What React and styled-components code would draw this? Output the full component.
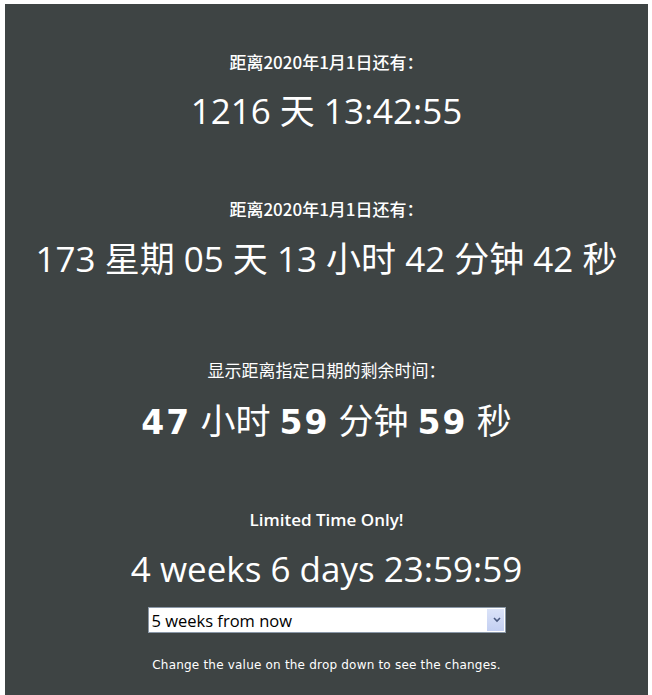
import React from "react";
import styled, { createGlobalStyle } from "styled-components";

const Global = createGlobalStyle`
  html, body { margin: 0; padding: 0; background: #ffffff; }
  body { font-family: "Noto Sans", "Noto Sans CJK SC", sans-serif; }
`;

const Panel = styled.div`
  margin: 4px 4px 0 5px;
  background: #3e4444;
  min-height: 691px;
  color: #ffffff;
  display: flex;
  flex-direction: column;
  align-items: center;
  padding-top: 47px;
  box-sizing: border-box;
`;

const Block = styled.section`
  display: flex;
  flex-direction: column;
  align-items: center;
  margin-bottom: ${(p) => p.$gap}px;
`;

const Label = styled.div`
  font-family: "Noto Sans CJK SC", "Noto Sans", sans-serif;
  font-size: 17px;
  line-height: 22px;
  font-weight: ${(p) => (p.$bold ? 500 : 400)};
`;

const EnLabel = styled.div`
  font-family: "Open Sans", sans-serif;
  font-size: 17px;
  line-height: 22px;
  font-weight: 600;
  letter-spacing: 0px;
`;

const Big = styled.div`
  font-family: "Open Sans", "Noto Sans CJK SC", sans-serif;
  font-size: 35px;
  line-height: 46px;
  margin-top: ${(p) => p.$mt}px;
  white-space: nowrap;
`;

const Num = styled.span`
  font-family: "DejaVu Sans", sans-serif;
  font-weight: 900;
  font-size: 33px;
  letter-spacing: 2px;
`;

const SelectWrap = styled.div`
  position: relative;
  margin-top: 15px;
  height: 26px;
`;

const Select = styled.select`
  display: block;
  width: 358px;
  height: 26px;
  font-family: "Open Sans", sans-serif;
  font-size: 16.5px;
  color: #000;
  background: #fff;
  border: 1px solid #8a98a8;
  padding: 0 24px 0 3px;
  appearance: none;
  background-image: linear-gradient(#dbe3f8, #c3cff2);
  background-size: 17px 22px;
  background-position: right 1px center;
  background-repeat: no-repeat;
`;

const Arrow = styled.svg`
  position: absolute;
  right: 5px;
  top: 10px;
  pointer-events: none;
`;

const Caption = styled.div`
  margin-top: 24px;
  font-family: "DejaVu Sans", sans-serif;
  font-size: 12px;
  line-height: 16px;
  letter-spacing: 0.2px;
`;

export default function App() {
  return (
    <>
      <Global />
      <Panel>
        <Block $gap={64}>
          <Label $bold>距离2020年1月1日还有：</Label>
          <Big $mt={15}>1216 天 13:42:55</Big>
        </Block>
        <Block $gap={77}>
          <Label $bold>距离2020年1月1日还有：</Label>
          <Big $mt={16}>173 星期 05 天 13 小时 42 分钟 42 秒</Big>
        </Block>
        <Block $gap={63}>
          <Label>显示距离指定日期的剩余时间：</Label>
          <Big $mt={17}>
            <Num>47</Num> 小时 <Num>59</Num> 分钟 <Num>59</Num> 秒
          </Big>
        </Block>
        <Block $gap={0}>
          <EnLabel>Limited Time Only!</EnLabel>
          <Big $mt={15}>4 weeks 6 days 23:59:59</Big>
          <SelectWrap>
            <Select defaultValue="5">
              <option value="5">5 weeks from now</option>
              <option value="4">4 weeks from now</option>
              <option value="3">3 weeks from now</option>
            </Select>
            <Arrow width="8" height="6" viewBox="0 0 8 6">
              <path d="M1 1 L4 4 L7 1" stroke="#4a5a80" strokeWidth="1.6" fill="none" />
            </Arrow>
          </SelectWrap>
          <Caption>Change the value on the drop down to see the changes.</Caption>
        </Block>
      </Panel>
    </>
  );
}
